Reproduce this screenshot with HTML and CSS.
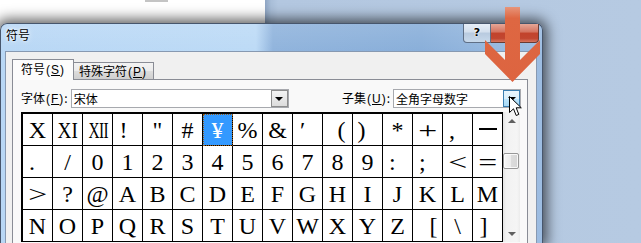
FILE: index.html
```html
<!DOCTYPE html>
<html lang="zh-CN">
<head>
  <meta charset="UTF-8">
  <meta name="viewport" content="width=device-width, initial-scale=1.0">
  <title>符号</title>
  <link rel="stylesheet" href="styles.css">
</head>
<body>
  <!-- document page behind the dialog -->
  <div class="page"><span class="page-mark"></span></div>

  <div class="dialog">
    <div class="titlebar">
      <span class="title">符号</span>
      <div class="caption-btns">
        <span class="cap-btn help">?</span>
        <span class="cap-btn close"></span>
      </div>
    </div>

    <div class="client">
      <div class="tabs">
        <span class="tab active">符号<span class="key">(<u>S</u>)</span></span>
        <span class="tab">特殊字符<span class="key">(<u>P</u>)</span></span>
      </div>

      <div class="panel">
        <div class="row">
          <div class="field">
            <label>字体<span class="key">(<u>F</u>)</span>:</label>
            <div class="combo font-combo"><span class="value">宋体</span><span class="drop"><i></i></span></div>
          </div>
          <div class="field">
            <label>子集<span class="key">(<u>U</u>)</span>:</label>
            <div class="combo subset-combo"><span class="value">全角字母数字</span><span class="drop hot"><i></i></span></div>
          </div>
        </div>

        <div class="chart">
          <div class="grid">
            <span class="cell">X</span>
            <span class="cell"><b class="sq2">XI</b></span>
            <span class="cell"><b class="sq3">XII</b></span>
            <span class="cell l4">!</span>
            <span class="cell">"</span>
            <span class="cell">#</span>
            <span class="cell selected">¥</span>
            <span class="cell">%</span>
            <span class="cell">&amp;</span>
            <span class="cell l5">′</span>
            <span class="cell r4">(</span>
            <span class="cell l6">)</span>
            <span class="cell">*</span>
            <span class="cell"><b class="wide">+</b></span>
            <span class="cell l8">,</span>
            <span class="cell"><i class="bar"></i></span>

            <span class="cell l8">.</span>
            <span class="cell">/</span>
            <span class="cell">0</span>
            <span class="cell">1</span>
            <span class="cell">2</span>
            <span class="cell">3</span>
            <span class="cell">4</span>
            <span class="cell">5</span>
            <span class="cell">6</span>
            <span class="cell">7</span>
            <span class="cell">8</span>
            <span class="cell">9</span>
            <span class="cell l8">:</span>
            <span class="cell l8">;</span>
            <span class="cell"><b class="wide">&lt;</b></span>
            <span class="cell"><b class="wide">=</b></span>

            <span class="cell"><b class="wide">&gt;</b></span>
            <span class="cell">?</span>
            <span class="cell">@</span>
            <span class="cell">A</span>
            <span class="cell">B</span>
            <span class="cell">C</span>
            <span class="cell">D</span>
            <span class="cell">E</span>
            <span class="cell">F</span>
            <span class="cell">G</span>
            <span class="cell">H</span>
            <span class="cell">I</span>
            <span class="cell">J</span>
            <span class="cell">K</span>
            <span class="cell">L</span>
            <span class="cell">M</span>

            <span class="cell">N</span>
            <span class="cell">O</span>
            <span class="cell">P</span>
            <span class="cell">Q</span>
            <span class="cell">R</span>
            <span class="cell">S</span>
            <span class="cell">T</span>
            <span class="cell">U</span>
            <span class="cell">V</span>
            <span class="cell">W</span>
            <span class="cell">X</span>
            <span class="cell">Y</span>
            <span class="cell">Z</span>
            <span class="cell r6">[</span>
            <span class="cell">\</span>
            <span class="cell l4">]</span>
          </div>
          <div class="scrollbar">
            <span class="sb-btn"><i class="up"></i></span>
            <span class="thumb"></span>
            <span class="sb-btn down-btn"><i class="down"></i></span>
          </div>
        </div>
      </div>
    </div>
  </div>

  <!-- callout arrow over the screenshot -->
  <svg class="arrow" width="65" height="90" viewBox="0 0 65 90">
    <defs>
      <linearGradient id="shaft" x1="0" y1="0" x2="0" y2="1">
        <stop offset="0" stop-color="#e7957a"/>
        <stop offset="0.15" stop-color="#de6742"/>
        <stop offset="1" stop-color="#dd6440"/>
      </linearGradient>
    </defs>
    <polygon points="25,7 40,7 40,60 60,40 60,54 32.5,82 5,54 5,40 25,60" fill="url(#shaft)"/>
  </svg>

  <svg class="cursor" width="14" height="22" viewBox="0 0 14 22">
    <path d="M0.5 0.5 L0.5 16.5 L4.5 12.8 L7.2 19.5 L9.8 18.4 L7.2 11.8 L12.3 11.8 Z" fill="#fff" stroke="#000" stroke-width="1" stroke-linejoin="round"/>
  </svg>
</body>
</html>
```

FILE: styles.css
```css
body {
  margin: 0;
  width: 641px;
  height: 243px;
  overflow: hidden;
  position: relative;
  font-family: "Noto Sans CJK SC", sans-serif;
  font-size: 12px;
  color: #000;
  background: linear-gradient(to right, #fff 0, #fff 265px, #8ea5c3 265px, #a9bed8 271px, #b3c7e0 278px, #b6cae2 100%);
}

.page {
  width: 265px;
  height: 23px;
  background: #fff;
}
.page-mark {
  display: block;
  margin-left: 145px;
  width: 23px;
  height: 2px;
  background: #c4c4c4;
}

/* dialog window */
.dialog {
  position: absolute;
  left: 0;
  top: 23px;
  width: 543px;
  height: 220px;
  box-sizing: border-box;
  padding: 0 5px 0 4px;
  border: 1px solid #47566c;
  border-bottom: none;
  border-radius: 7px 7px 0 0;
  display: flex;
  flex-direction: column;
  background:
    linear-gradient(to bottom, rgba(255, 255, 255, 0.12), rgba(255, 255, 255, 0) 30px),
    linear-gradient(to right, #b8d7f5 0, #bcdaf6 255px, #8fb3dc 272px, #88aed9 420px, #9dbde2 100%);
  box-shadow: 0 0 13px 4px rgba(0, 0, 0, 0.62);
}
.titlebar {
  height: 27px;
  display: flex;
  align-items: flex-start;
}
.title {
  margin: 4px 0 0 1px;
  line-height: 14px;
  text-shadow: 0 0 6px #fff, 0 0 3px #fff;
}
.caption-btns {
  margin-left: auto;
  margin-right: -2px;
  display: flex;
}
.cap-btn {
  height: 19px;
  box-sizing: border-box;
  border: 1px solid #5f6f86;
  border-top: none;
}
.help {
  width: 28px;
  border-radius: 0 0 0 4px;
  background: linear-gradient(#e7eef7 0, #d3dfed 45%, #b8cadf 50%, #c8d9eb 100%);
  text-align: center;
  font-family: "DejaVu Sans", sans-serif;
  font-weight: bold;
  font-size: 11px;
  line-height: 17px;
  text-shadow: 0 0 2px #fff, 0 0 2px #fff;
}
.close {
  width: 48px;
  border-left: none;
  border-color: #6a3b33;
  border-radius: 0 0 4px 0;
  background: linear-gradient(#e6a797 0, #d4725e 45%, #c2432c 50%, #c14630 80%, #d77760 100%);
}

.client {
  flex: 1;
  background: #f0f0f0;
  border: 1px solid #8799b1;
  border-bottom: none;
  display: flex;
  flex-direction: column;
}

/* tabs */
.tabs {
  display: flex;
  align-items: flex-end;
  margin: 7px 0 0 6px;
  height: 20px;
}
.tab {
  box-sizing: border-box;
  height: 17px;
  width: 80px;
  padding: 1px 0 0 5px;
  line-height: 14px;
  border: 1px solid #898c95;
  border-bottom: none;
  border-left: none;
  background: linear-gradient(#f3f3f3 0, #ebebeb 50%, #dddddd 51%, #cfcfcf 100%);
}
.tab.active {
  position: relative;
  z-index: 1;
  width: 62px;
  height: 21px;
  margin-bottom: -1px;
  padding: 2px 0 0 8px;
  border-left: 1px solid #898c95;
  background: #fcfcfc;
}
.key {
  font-family: "Liberation Sans", sans-serif;
  font-size: 12px;
  letter-spacing: 1px;
  margin-left: 1px;
}

.panel {
  flex: 1;
  width: 516px;
  box-sizing: border-box;
  margin-left: 6px;
  border: 1px solid #898c95;
  border-bottom: none;
  background: #f9f9f9;
}
.row {
  display: flex;
  justify-content: space-between;
  align-items: center;
  padding: 9px 6px 0 8px;
}
.field {
  display: flex;
  align-items: center;
}
.field label {
  margin-right: 3px;
  line-height: 14px;
}

/* combo boxes */
.combo {
  height: 19px;
  box-sizing: border-box;
  border: 1px solid #a7a9ae;
  background: #fff;
  display: flex;
}
.font-combo {
  width: 218px;
}
.subset-combo {
  width: 128px;
}
.combo .value {
  flex: 1;
  padding-left: 2px;
  line-height: 17px;
}
.drop {
  width: 17px;
  box-sizing: border-box;
  border: 1px solid #8d8d8d;
  background: linear-gradient(#f3f3f3, #dcdcdc);
  display: flex;
  align-items: center;
  justify-content: center;
}
.drop.hot {
  border-color: #3c7fb1;
  background: linear-gradient(#eaf6fd 0, #d9f0fc 50%, #bee6fd 51%, #a7d9f5 100%);
}
.drop i {
  width: 0;
  height: 0;
  border-left: 4px solid transparent;
  border-right: 4px solid transparent;
  border-top: 4px solid #000;
}

/* symbol chart */
.chart {
  display: flex;
  margin: 4px 0 0 8px;
}
.grid {
  display: grid;
  grid-template-columns: repeat(16, 30px);
  border-left: 2px solid #000;
  border-top: 2px solid #000;
}
.cell {
  box-sizing: border-box;
  height: 32px;
  line-height: 33px;
  overflow: hidden;
  text-align: center;
  background: #fff;
  border-right: 1px solid #000;
  border-bottom: 1px solid #000;
  font-family: "Liberation Serif", serif;
  font-size: 24px;
}
.cell b {
  display: inline-block;
  font-weight: normal;
}
.sq2 {
  transform: scaleX(0.8);
}
.sq3 {
  transform: scaleX(0.64);
  letter-spacing: -1px;
}
.wide {
  transform: scaleX(1.4);
}
.l4 { padding-right: 8px; }
.l5 { padding-right: 10px; }
.l6 { padding-right: 12px; }
.l8 { text-align: left; padding-left: 6px; }
.r4 { padding-left: 8px; }
.r6 { padding-left: 12px; }
.bar {
  display: inline-block;
  width: 18px;
  height: 2px;
  background: #000;
  vertical-align: 8px;
}
.cell.selected {
  background: #3399ff;
  color: #fff;
  outline: 1px dotted #9a5a10;
  outline-offset: -1px;
}

/* scrollbar */
.scrollbar {
  width: 17px;
  display: flex;
  flex-direction: column;
  background: linear-gradient(to right, #e3e3e3 0, #f2f2f2 3px, #f5f5f5 14px, #ececec 100%);
}
.sb-btn {
  height: 17px;
  display: flex;
  align-items: center;
  justify-content: center;
}
.down-btn {
  margin-top: auto;
}
.sb-btn i {
  width: 0;
  height: 0;
  border-left: 4px solid transparent;
  border-right: 4px solid transparent;
}
.sb-btn .up {
  border-bottom: 4px solid #606060;
}
.sb-btn .down {
  border-top: 4px solid #606060;
}
.thumb {
  margin: 24px 0 0 0;
  width: 16px;
  height: 16px;
  box-sizing: border-box;
  border: 1px solid #979797;
  border-radius: 2px;
  background: linear-gradient(to right, #f7f7f7 0, #ececec 50%, #dcdcdc 51%, #d6d6d6 100%);
  box-shadow: inset 0 0 0 1px rgba(255, 255, 255, 0.8);
}

/* overlays */
.arrow {
  position: absolute;
  left: 480px;
  top: 0;
}
.cursor {
  position: absolute;
  left: 509px;
  top: 96px;
}
```
